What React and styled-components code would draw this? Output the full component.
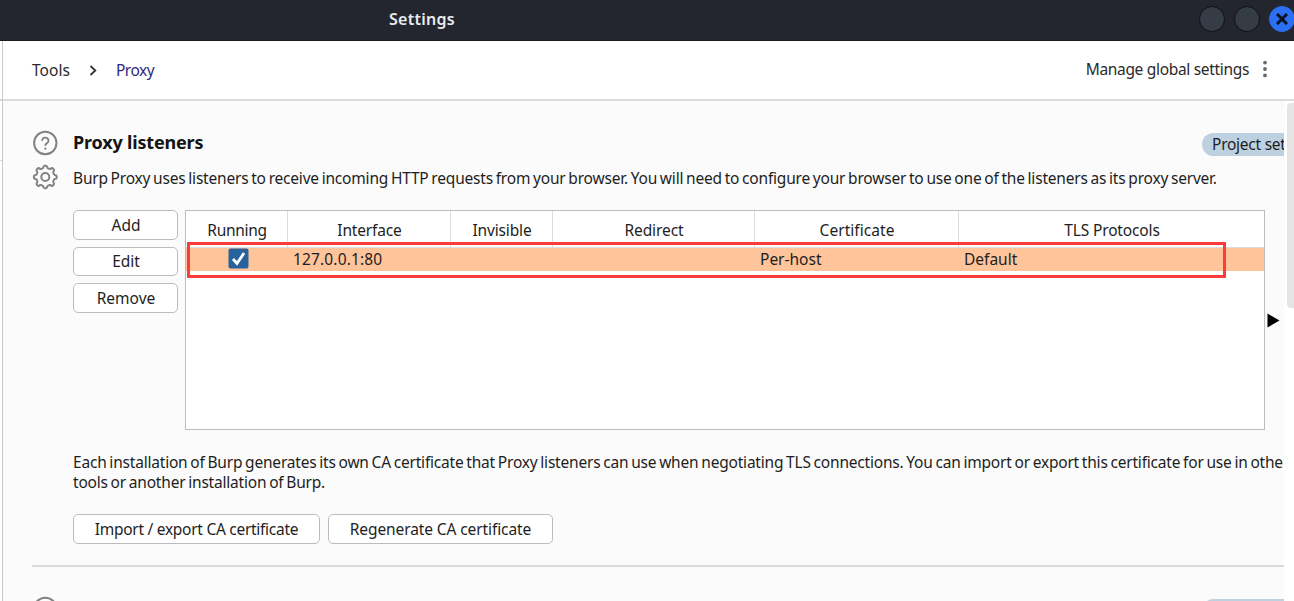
import React from "react";
import styled, { createGlobalStyle } from "styled-components";

const Global = createGlobalStyle`
  * { box-sizing: border-box; }
  html, body { margin: 0; padding: 0; overflow: hidden; background: #fff; }
  body {
    font-family: "Noto Sans", sans-serif;
    font-size: 15.5px;
    line-height: 20px;
    letter-spacing: -0.25px;
    color: #1e1e1e;
  }
`;

const Window = styled.div`
  display: flex;
  flex-direction: column;
  width: 1294px;
  height: 601px;
  overflow: hidden;
`;

const TitleBar = styled.header`
  display: flex;
  flex: none;
  align-items: flex-start;
  justify-content: space-between;
  height: 41px;
  padding: 6px 0 0 389px;
  background: #23262f;
  border-bottom: 1px solid #1b1d25;
`;

const WindowTitle = styled.span`
  font-size: 16px;
  font-weight: 600;
  line-height: 27px;
  letter-spacing: 0.25px;
  color: #e9ebee;
`;

const WindowButtons = styled.div`
  display: flex;
  flex: none;
  gap: 9px;
  width: 95px;
`;

const WindowButton = styled.span`
  display: flex;
  flex: none;
  align-items: center;
  justify-content: center;
  width: 26px;
  height: 26px;
  border-radius: 50%;
  border: 1.5px solid ${(p) => (p.$close ? "#2b6ff2" : "#0e1014")};
  background: ${(p) => (p.$close ? "#2b6ff2" : "#363c46")};
`;

const Body = styled.div`
  display: flex;
  flex: 1;
  min-height: 0;
`;

const SidebarEdge = styled.div`
  flex: none;
  width: 3px;
  border-right: 1px solid #c9c9c9;
  display: flex;
  flex-direction: column;
`;

const SidebarCell = styled.div`
  flex: none;
  height: ${(p) => p.$height}px;
  border-bottom: ${(p) => p.$line}px solid #d6d6d6;
`;

const Panel = styled.div`
  display: flex;
  flex: 1;
  flex-direction: column;
  min-width: 0;
`;

const Breadcrumbs = styled.nav`
  display: flex;
  flex: none;
  align-items: center;
  height: 60px;
  padding: 0 26px 0 29px;
  border-bottom: 2px solid #dadbdb;
`;

const Crumb = styled.span`
  letter-spacing: ${(p) => (p.$current ? "-0.5px" : "0.05px")};
  color: ${(p) => (p.$current ? "#2d2a80" : "#2a2a2a")};
`;

const CrumbArrow = styled.svg`
  margin: 0 19px 0 19px;
`;

const Manage = styled.div`
  display: flex;
  align-items: center;
  margin-left: auto;
  padding-bottom: 2px;
  letter-spacing: -0.32px;
  color: #2a2a2a;
`;

const Dots = styled.svg`
  margin-left: 13px;
`;

const Scroll = styled.div`
  display: flex;
  flex: 1;
  min-height: 0;
`;

const Content = styled.main`
  flex: none;
  width: 1281px;
  overflow: hidden;
  background: #fbfbfb;
`;

const ScrollTrack = styled.div`
  flex: 1;
  padding: 2px 0 0 3px;
  background: #fff;
`;

const ScrollThumb = styled.div`
  height: 205px;
  border-radius: 4px 0 0 4px;
  background: #e4e4e4;
`;

const Section = styled.section`
  display: flex;
  height: 466px;
  margin-left: 29px;
  padding-top: 29px;
  border-bottom: 2px solid #dadada;
`;

const SectionIcons = styled.div`
  display: flex;
  flex: none;
  flex-direction: column;
  gap: 8px;
  width: 41px;
`;

const SectionBody = styled.div`
  display: flex;
  flex: none;
  flex-direction: column;
  width: 1300px;
`;

const TitleRow = styled.div`
  display: flex;
  align-items: flex-start;
`;

const SectionTitle = styled.h2`
  flex: none;
  width: 1129px;
  margin: 0;
  font-size: 18px;
  font-weight: 700;
  line-height: 24px;
  letter-spacing: -0.18px;
  color: #141414;
`;

const Badge = styled.span`
  flex: none;
  width: 130px;
  height: 23px;
  margin-top: 3px;
  padding-left: 10px;
  border-radius: 12px;
  line-height: 23px;
  background: #bdd1e1;
`;

const Description = styled.p`
  margin: ${(p) => p.$top}px 0 0;
  white-space: nowrap;
  letter-spacing: ${(p) => p.$spacing}px;
  word-spacing: ${(p) => p.$word}px;
`;

const ListenerRow = styled.div`
  display: flex;
  margin-top: 22px;
`;

const ButtonColumn = styled.div`
  display: flex;
  flex: none;
  flex-direction: column;
  gap: 7px;
  width: 112px;
`;

const ButtonRow = styled.div`
  display: flex;
  gap: 8px;
  margin-top: 22px;
`;

const Button = styled.button`
  width: ${(p) => p.$width}px;
  height: ${(p) => p.$height || 29.6}px;
  padding: 0 0 ${(p) => (p.$height ? 1 : 0)}px ${(p) => (p.$height ? 0 : 1)}px;
  border: 1.5px solid #bcbcbc;
  border-radius: 5px;
  background: #fff;
  font: inherit;
  letter-spacing: ${(p) => p.$spacing || 0}px;
  color: #1e1e1e;
`;

const Table = styled.div`
  position: relative;
  flex: none;
  width: 1080px;
  height: 220px;
  border: 1.5px solid #bdbdbd;
  background: #fff;
`;

const TableRow = styled.div`
  display: grid;
  grid-template-columns: 102px 163px 102px 202px 204px 1fr;
`;

const HeadRow = styled(TableRow)`
  height: 37px;
  border-bottom: 1px solid #dcdcdc;
`;

const HeadCell = styled.div`
  border-right: 1px solid #dcdcdc;
  padding: 9px 0 0 1px;
  text-align: center;
  letter-spacing: ${(p) => p.$spacing || 0}px;
  &:last-child { border-right: 0; }
`;

const ListenerEntry = styled(TableRow)`
  height: 23px;
  background: #ffc499;
`;

const Cell = styled.div`
  padding: 0 5px;
  line-height: 22px;
  text-align: ${(p) => (p.$center ? "center" : "left")};
  letter-spacing: ${(p) => p.$spacing || 0}px;
`;

const Checkbox = styled.svg`
  display: block;
  margin: 0 0 0 37px;
`;

const Highlight = styled.div`
  position: absolute;
  left: 1px;
  top: 31px;
  width: 1039px;
  height: 36px;
  border: 3px solid #fb3c39;
`;

const Expander = styled.svg`
  flex: none;
  margin: 103px 0 0 2px;
`;

function HelpIcon() {
  return (
    <svg width="26" height="26" viewBox="0 0 26 26" fill="none" stroke="#828282" strokeLinecap="round" strokeLinejoin="round">
      <circle cx="13.3" cy="13" r="11.2" strokeWidth="2" />
      <path d="M10.2 10.1a3.2 3.2 0 0 1 6.3 0.8c0 2.2-3.1 2.5-3.1 4.3" strokeWidth="1.8" />
      <path d="M13.4 18.6v0.1" strokeWidth="2.1" />
    </svg>
  );
}

/* Outline of an eight-toothed gear centred on (13.3, 13). */
function gearPath() {
  const at = (deg, r) => {
    const a = (deg * Math.PI) / 180;
    return `${(13.3 + r * Math.cos(a)).toFixed(2)} ${(13 + r * Math.sin(a)).toFixed(2)}`;
  };
  let d = "";
  for (let k = 0; k < 8; k += 1) {
    const mid = k * 45 - 90;
    d += `${k ? "L" : "M"}${at(mid - 12, 9.5)} Q${at(mid - 10, 11.4)} ${at(mid - 4, 11.4)} `;
    d += `L${at(mid + 4, 11.4)} Q${at(mid + 10, 11.4)} ${at(mid + 12, 9.5)} `;
    d += `Q${at(mid + 22.5, 8.4)} ${at(mid + 33, 9.5)} `;
  }
  return `${d}Z`;
}

function GearIcon() {
  return (
    <svg width="26" height="26" viewBox="0 0 26 26" fill="none" stroke="#828282" strokeWidth="2" strokeLinejoin="round">
      <path d={gearPath()} />
      <circle cx="13.3" cy="13" r="4" />
    </svg>
  );
}

const COLUMNS = [
  { label: "Running", spacing: -0.3 },
  { label: "Interface", spacing: -0.15 },
  { label: "Invisible", spacing: -0.15 },
  { label: "Redirect", spacing: -0.1 },
  { label: "Certificate", spacing: 0.05 },
  { label: "TLS Protocols", spacing: -0.15 },
];

export default function App() {
  return (
    <>
      <Global />
      <Window>
        <TitleBar>
          <WindowTitle>Settings</WindowTitle>
          <WindowButtons>
            <WindowButton />
            <WindowButton />
            <WindowButton $close>
              <svg width="12" height="12" viewBox="0 0 12 12" stroke="#0d1220" strokeWidth="3">
                <path d="M1 1 11 11M11 1 1 11" />
              </svg>
            </WindowButton>
          </WindowButtons>
        </TitleBar>
        <Body>
          <SidebarEdge>
            <SidebarCell $height={60} $line={2} />
            <SidebarCell $height={60} $line={1} />
          </SidebarEdge>
          <Panel>
            <Breadcrumbs>
              <Crumb>Tools</Crumb>
              <CrumbArrow width="8" height="11" viewBox="0 0 8 11" fill="none" stroke="#333" strokeWidth="1.8">
                <path d="M1.5 1 6.3 5.5 1.5 10" />
              </CrumbArrow>
              <Crumb $current>Proxy</Crumb>
              <Manage>
                Manage global settings
                <Dots width="6" height="18" viewBox="0 0 6 18" fill="#6a6a6a">
                  <circle cx="3" cy="2.6" r="1.9" />
                  <circle cx="3" cy="9" r="1.9" />
                  <circle cx="3" cy="15.4" r="1.9" />
                </Dots>
              </Manage>
            </Breadcrumbs>
            <Scroll>
              <Content>
                <Section>
                  <SectionIcons>
                    <HelpIcon />
                    <GearIcon />
                  </SectionIcons>
                  <SectionBody>
                    <TitleRow>
                      <SectionTitle>Proxy listeners</SectionTitle>
                      <Badge>Project setting</Badge>
                    </TitleRow>
                    <Description $top={12} $spacing={-0.2} $word={-1}>
                      Burp Proxy uses listeners to receive incoming HTTP requests from your browser. You will need to
                      configure your browser to use one of the listeners as its proxy server.
                    </Description>
                    <ListenerRow>
                      <ButtonColumn>
                        <Button $width={105}>Add</Button>
                        <Button $width={105}>Edit</Button>
                        <Button $width={105}>Remove</Button>
                      </ButtonColumn>
                      <Table>
                        <HeadRow>
                          {COLUMNS.map((c) => (
                            <HeadCell key={c.label} $spacing={c.spacing}>{c.label}</HeadCell>
                          ))}
                        </HeadRow>
                        <ListenerEntry>
                          <Cell $center>
                            <Checkbox width="21" height="21" viewBox="0 0 21 21">
                              <rect x="0.5" y="0.5" width="20" height="20" rx="2" fill="#27629d" />
                              <path d="M5 11 9 15.5 16 5" fill="none" stroke="#fff" strokeWidth="2.8" />
                            </Checkbox>
                          </Cell>
                          <Cell $spacing={0.15}>127.0.0.1:80</Cell>
                          <Cell />
                          <Cell />
                          <Cell>Per-host</Cell>
                          <Cell>Default</Cell>
                        </ListenerEntry>
                        <Highlight />
                      </Table>
                      <Expander width="13" height="15" viewBox="0 0 13 15">
                        <path d="M0.5 0.5 12.5 7.5 0.5 14.5Z" fill="#000" />
                      </Expander>
                    </ListenerRow>
                    <Description $top={22} $spacing={-0.2} $word={-1}>
                      Each installation of Burp generates its own CA certificate that Proxy listeners can use when
                      negotiating TLS connections. You can import or export this certificate for use in other
                      <br />
                      tools or another installation of Burp.
                    </Description>
                    <ButtonRow>
                      <Button $width={247} $height={30} $spacing={-0.28}>Import / export CA certificate</Button>
                      <Button $width={225} $height={30} $spacing={-0.1}>Regenerate CA certificate</Button>
                    </ButtonRow>
                  </SectionBody>
                </Section>
                <Section>
                  <SectionIcons>
                    <HelpIcon />
                  </SectionIcons>
                  <SectionBody>
                    <TitleRow>
                      <SectionTitle>Request interception rules</SectionTitle>
                      <Badge>Project setting</Badge>
                    </TitleRow>
                  </SectionBody>
                </Section>
              </Content>
              <ScrollTrack>
                <ScrollThumb />
              </ScrollTrack>
            </Scroll>
          </Panel>
        </Body>
      </Window>
    </>
  );
}
